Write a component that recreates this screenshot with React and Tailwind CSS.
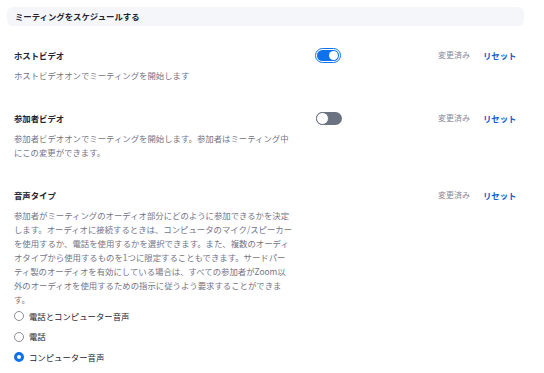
const font = { fontFamily: '"Noto Sans CJK JP", "Noto Sans", sans-serif' };

const Toggle = ({ on }) =>
  on ? (
    <span className="inline-flex rounded-full border-[1.5px] border-[#0e72ed] p-[1px]">
      <span className="flex h-[11px] w-[22px] items-center justify-end rounded-full bg-[#0e72ed] px-[1px]">
        <span className="h-[9px] w-[9px] rounded-full bg-white" />
      </span>
    </span>
  ) : (
    <span className="ml-[1px] flex h-[13px] w-[26px] items-center rounded-full bg-[#6b7280]">
      <span className="h-[13px] w-[13px] rounded-full border border-[#6b7280] bg-white" />
    </span>
  );

const Actions = () => (
  <div className="flex h-[14px] items-center gap-[13px]">
    <span className="text-[8px] text-[#8a8a98]">変更済み</span>
    <span className="text-[8.4px] font-bold text-[#0e5ccb]">リセット</span>
  </div>
);

const Row = ({ title, lines, toggle, children, className }) => (
  <div className={`flex items-start pl-[14px] ${className}`}>
    <div className="w-[301px]">
      <div className="h-[14px] text-[8.4px] font-bold leading-[14px] text-[#232333]">{title}</div>
      <div className="mt-[6px] text-[8.4px] leading-[14px] whitespace-nowrap text-[#747487]">
        {lines.map((l) => (
          <div key={l}>{l}</div>
        ))}
      </div>
      {children}
    </div>
    <div className="flex h-[14px] w-[123px] items-center">
      {toggle !== undefined && <Toggle on={toggle} />}
    </div>
    <Actions />
  </div>
);

const Radio = ({ label, checked }) => (
  <div className="flex h-[20.5px] items-center gap-[5px]">
    {checked ? (
      <span className="h-[10px] w-[10px] rounded-full border-[3px] border-[#0e72ed] bg-white" />
    ) : (
      <span className="h-[10px] w-[10px] rounded-full border border-[#8d8d9a] bg-white" />
    )}
    <span className="text-[8.4px] text-[#232333]">{label}</span>
  </div>
);

export default function App() {
  return (
    <div className="h-[373px] w-[544px] overflow-hidden bg-white pt-[7px]" style={font}>
      <div className="mx-[7px] flex h-[19px] w-[517px] items-center rounded-md bg-[#f5f6f9] pl-[8px]">
        <span className="text-[8.4px] font-bold text-[#232333]">ミーティングをスケジュールする</span>
      </div>

      <Row
        className="mt-[22px]"
        title="ホストビデオ"
        toggle={true}
        lines={['ホストビデオオンでミーティングを開始します']}
      />

      <Row
        className="mt-[29px]"
        title="参加者ビデオ"
        toggle={false}
        lines={[
          '参加者ビデオオンでミーティングを開始します。参加者はミーティング中',
          'にこの変更ができます。',
        ]}
      />

      <Row
        className="mt-[29px]"
        title="音声タイプ"
        lines={[
          '参加者がミーティングのオーディオ部分にどのように参加できるかを決定',
          'します。オーディオに接続するときは、コンピュータのマイク/スピーカー',
          'を使用するか、電話を使用するかを選択できます。また、複数のオーディ',
          'オタイプから使用するものを1つに限定することもできます。サードパー',
          'ティ製のオーディオを有効にしている場合は、すべての参加者がZoom以',
          '外のオーディオを使用するための指示に従うよう要求することができま',
          'す。',
        ]}
      >
        <div>
          <Radio label="電話とコンピューター音声" />
          <Radio label="電話" />
          <Radio label="コンピューター音声" checked />
        </div>
      </Row>
    </div>
  );
}
